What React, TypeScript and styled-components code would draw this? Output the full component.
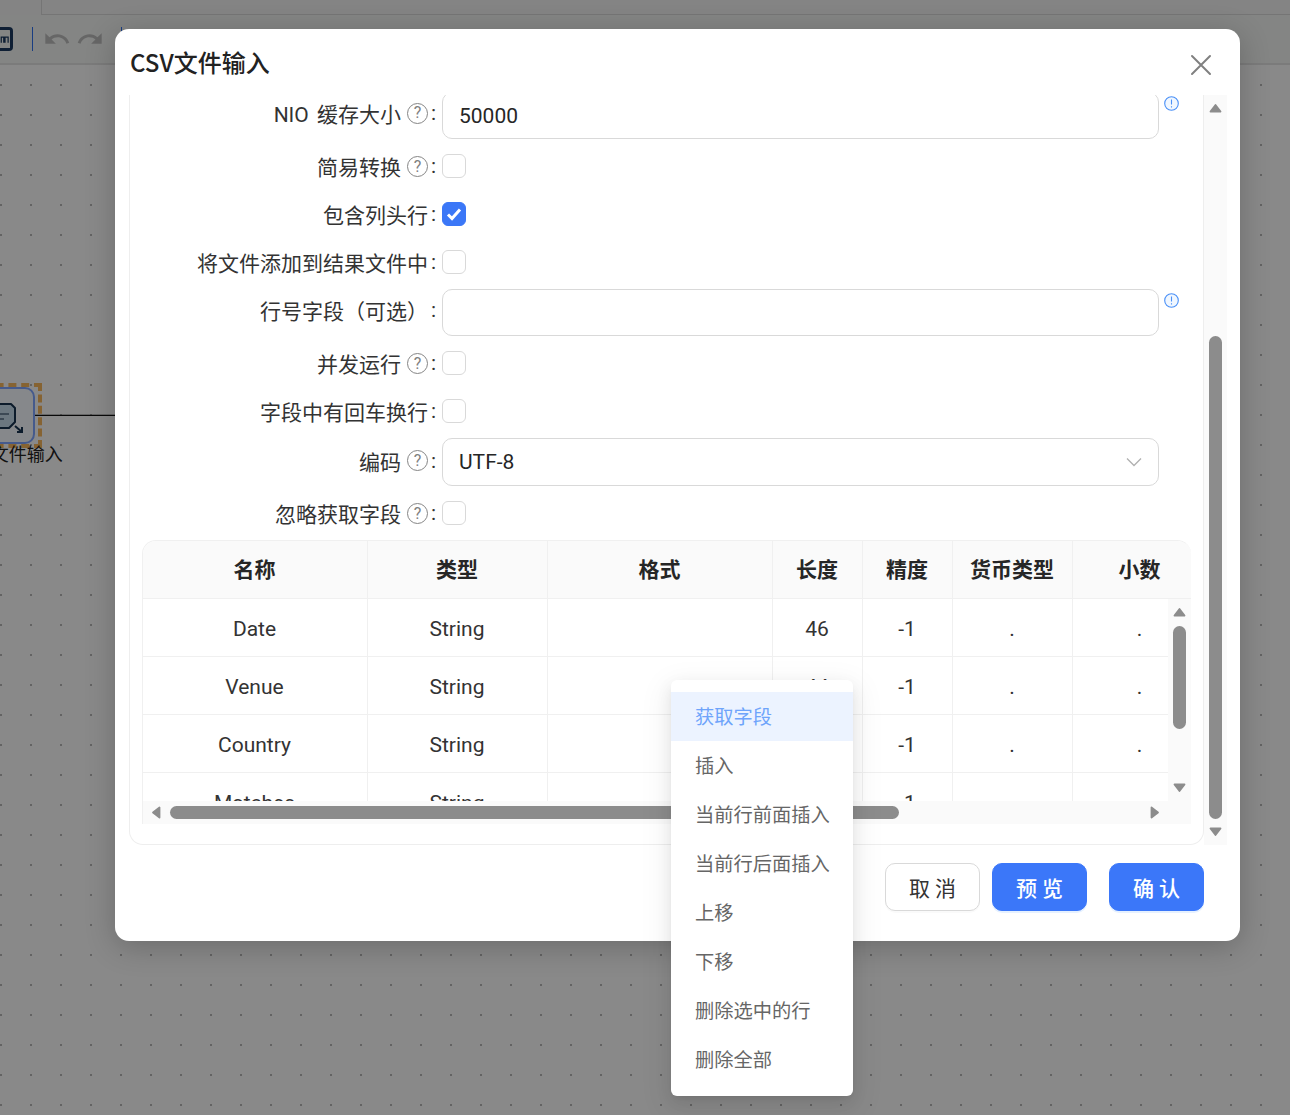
import * as React from 'react'
import styled, { createGlobalStyle } from 'styled-components'

const CJK = `"Noto Sans CJK SC", "Noto Sans", sans-serif`
const FONT = `Roboto, ${CJK}`

const GlobalStyle = createGlobalStyle`
  html, body {
    margin: 0;
    padding: 0;
    background: #fafafa;
  }
  * {
    box-sizing: border-box;
  }
`

type Field = {
  label: string
  kind: 'input' | 'check' | 'select'
  help?: boolean
  info?: boolean
  value?: string
  checked?: boolean
}

const fields: Field[] = [
  { label: 'NIO 缓存大小', kind: 'input', help: true, info: true, value: '50000' },
  { label: '简易转换', kind: 'check', help: true },
  { label: '包含列头行', kind: 'check', checked: true },
  { label: '将文件添加到结果文件中', kind: 'check' },
  { label: '行号字段（可选）', kind: 'input', info: true, value: '' },
  { label: '并发运行', kind: 'check', help: true },
  { label: '字段中有回车换行', kind: 'check' },
  { label: '编码', kind: 'select', help: true, value: 'UTF-8' },
  { label: '忽略获取字段', kind: 'check', help: true }
]

const columns = [
  { title: '名称', width: 225 },
  { title: '类型', width: 180 },
  { title: '格式', width: 225 },
  { title: '长度', width: 90 },
  { title: '精度', width: 90 },
  { title: '货币类型', width: 120 },
  { title: '小数', width: 135 }
]

const rows = [
  ['Date', 'String', '', '46', '-1', '.', '.'],
  ['Venue', 'String', '', '44', '-1', '.', '.'],
  ['Country', 'String', '', '44', '-1', '.', '.'],
  ['Matches', 'String', '', '44', '-1', '.', '.']
]

const menuItems = ['获取字段', '插入', '当前行前面插入', '当前行后面插入', '上移', '下移', '删除选中的行', '删除全部']

const Arrow = ({ dir }: { dir: 'up' | 'down' | 'left' | 'right' }) => {
  const rotate = { up: 0, right: 90, down: 180, left: 270 }[dir]
  return (
    <svg width="13" height="13" viewBox="0 0 13 13" style={{ transform: `rotate(${rotate}deg)`, flex: 'none' }}>
      <path d="M6.5 3 L11.5 9.5 H1.5 Z" fill="#8c8c8c" stroke="#8c8c8c" strokeWidth="1.8" strokeLinejoin="round" />
    </svg>
  )
}

export default function App() {
  return (
    <Page>
      <GlobalStyle />
      <TopStrip>
        <TopTab />
      </TopStrip>
      <Toolbar>
        <ToolSquare>
          <svg width="16" height="14" viewBox="0 0 16 14">
            <path d="M2 13V4h4v9M8 13V4h5v9" fill="none" stroke="#1d3a5f" strokeWidth="2" />
          </svg>
        </ToolSquare>
        <ToolDivider />
        <svg width="28" height="28" viewBox="0 0 24 24">
          <path
            d="M12.5 8c-2.65 0-5.05.99-6.9 2.6L2 7v9h9l-3.62-3.62c1.39-1.16 3.16-1.88 5.12-1.88 3.54 0 6.55 2.31 7.6 5.5l2.37-.78C21.08 11.03 17.15 8 12.5 8z"
            fill="#bababa"
          />
        </svg>
        <ToolRedo>
          <svg width="28" height="28" viewBox="0 0 24 24">
            <path
              d="M18.4 10.6C16.55 8.99 14.15 8 11.5 8c-4.65 0-8.58 3.03-9.96 7.22L3.9 16c1.05-3.19 4.05-5.5 7.6-5.5 1.95 0 3.73.72 5.12 1.88L13 16h9V7l-3.6 3.6z"
              fill="#bababa"
            />
          </svg>
        </ToolRedo>
        <ToolDividerEnd />
      </Toolbar>
      <Canvas>
        <NodeFrame>
          <NodeBox>
            <svg width="36" height="40" viewBox="0 0 36 40">
              <path d="M0 8h20l4 4v14l-6 6H0z" fill="#c4d9ea" stroke="#16324f" strokeWidth="2" strokeLinejoin="round" />
              <path d="M2 18h16M2 23h11" stroke="#16324f" strokeWidth="1.2" />
              <path d="M24 30l7 6M31 31v5h-5" fill="none" stroke="#16324f" strokeWidth="2" />
            </svg>
          </NodeBox>
          <NodeLabel>CSV文件输入</NodeLabel>
        </NodeFrame>
        <NodeLine />
      </Canvas>
      <Mask />
      <Dialog>
        <DialogHeader>
          <DialogTitle>CSV文件输入</DialogTitle>
          <CloseButton>
            <svg width="22" height="22" viewBox="0 0 22 22">
              <path d="M2 2l18 18M20 2L2 20" stroke="#808080" strokeWidth="2" strokeLinecap="round" />
            </svg>
          </CloseButton>
        </DialogHeader>
        <DialogBody>
          <FormPanel>
            <FormInner>
              {fields.map(field => (
                <FieldRow key={field.label} $kind={field.kind}>
                  <FieldLabel $kind={field.kind}>
                    <span>{field.label}</span>
                    {field.help && <HelpMark $kind={field.kind}>?</HelpMark>}
                    <Colon>:</Colon>
                  </FieldLabel>
                  {field.kind === 'check' && (
                    <CheckBox $checked={field.checked}>
                      {field.checked && (
                        <svg width="16" height="14" viewBox="0 0 16 14">
                          <path d="M2 7.5l4 4 8-9" fill="none" stroke="#fff" strokeWidth="3" />
                        </svg>
                      )}
                    </CheckBox>
                  )}
                  {field.kind === 'input' && <TextBox>{field.value}</TextBox>}
                  {field.kind === 'select' && (
                    <SelectBox>
                      <span>{field.value}</span>
                      <svg width="16" height="10" viewBox="0 0 16 10">
                        <path d="M1 1.5l7 7 7-7" fill="none" stroke="#b0b0b0" strokeWidth="1.3" />
                      </svg>
                    </SelectBox>
                  )}
                  {field.info && (
                    <InfoMark>
                      <svg width="15" height="15" viewBox="0 0 15 15">
                        <circle cx="7.5" cy="7.5" r="6.8" fill="#f0f7ff" stroke="#4a90f7" strokeWidth="1.1" />
                        <path d="M7.5 3.6v5M7.5 10.2v1.2" stroke="#4a90f7" strokeWidth="1.1" />
                      </svg>
                    </InfoMark>
                  )}
                </FieldRow>
              ))}
              <TableWrap>
                <HeadRow>
                  {columns.map(col => (
                    <HeadCell key={col.title} $width={col.width}>
                      {col.title}
                    </HeadCell>
                  ))}
                </HeadRow>
                <TableMiddle>
                  <TableRows>
                    {rows.map(row => (
                      <BodyRow key={row[0]}>
                        {row.map((cell, i) => (
                          <BodyCell key={i} $width={columns[i].width}>
                            {cell}
                          </BodyCell>
                        ))}
                      </BodyRow>
                    ))}
                  </TableRows>
                  <TableVBar>
                    <Arrow dir="up" />
                    <TableVThumb />
                    <Arrow dir="down" />
                  </TableVBar>
                </TableMiddle>
                <TableHBar>
                  <Arrow dir="left" />
                  <TableHThumb />
                  <Arrow dir="right" />
                </TableHBar>
              </TableWrap>
            </FormInner>
          </FormPanel>
          <MainBar>
            <Arrow dir="up" />
            <MainThumb />
            <Arrow dir="down" />
          </MainBar>
        </DialogBody>
        <DialogFooter>
          <FooterButton>取 消</FooterButton>
          <FooterButton $primary>预 览</FooterButton>
          <FooterButton $primary>确 认</FooterButton>
        </DialogFooter>
      </Dialog>
      <ContextMenu>
        {menuItems.map((item, i) => (
          <MenuItem key={item} $active={i === 0}>
            {item}
          </MenuItem>
        ))}
      </ContextMenu>
    </Page>
  )
}

const Page = styled.div`
  position: relative;
  width: 1290px;
  height: 1115px;
  overflow: hidden;
  display: flex;
  flex-direction: column;
  font-family: ${FONT};
`

const TopStrip = styled.div`
  height: 15px;
  padding-left: 41px;
  background: #f0f0f0;
`

const TopTab = styled.div`
  height: 15px;
  border-left: 1px solid #d6d6d6;
  border-bottom: 1px solid #d6d6d6;
`

const Toolbar = styled.div`
  height: 50px;
  display: flex;
  align-items: center;
  background: #f0f2f0;
  border-bottom: 2px solid #e0e0e0;
`

const ToolSquare = styled.div`
  width: 13px;
  height: 24px;
  border: 3px solid #1d3a5f;
  border-left: 0;
  border-radius: 0 4px 4px 0;
  display: flex;
  align-items: center;
  justify-content: flex-end;
  overflow: hidden;
`

const ToolDivider = styled.div`
  width: 1px;
  height: 24px;
  margin: 0 10px 0 19px;
  background: #2f6fed;
`

const ToolRedo = styled.div`
  display: flex;
  margin-left: 5px;
`

const ToolDividerEnd = styled(ToolDivider)`
  margin: 0 0 0 17px;
`

const Canvas = styled.div`
  position: relative;
  flex: 1;
  background-color: #fafafa;
  background-image: radial-gradient(circle at 1px 20px, #b4b4b4 1px, transparent 1.3px);
  background-size: 30px 30px;
`

const NodeFrame = styled.div`
  position: absolute;
  left: -30px;
  top: 318px;
  width: 72px;
  height: 65px;
  border: 4px dashed #f5b45c;
  display: flex;
  align-items: center;
  justify-content: flex-start;
`

const NodeBox = styled.div`
  width: 61px;
  height: 57px;
  border: 2px solid #7fa4ff;
  border-radius: 10px;
  background: #f4f8fd;
  display: flex;
  align-items: center;
  justify-content: center;
  padding-left: 8px;
`

const NodeLabel = styled.div`
  position: absolute;
  left: -17px;
  top: 56px;
  width: 110px;
  font-size: 18px;
  line-height: 24px;
  white-space: nowrap;
  color: #222;
`

const NodeLine = styled.div`
  position: absolute;
  left: 35px;
  top: 350px;
  width: 107px;
  height: 1px;
  background: #111;
  box-shadow: 0 -1px 0 rgba(0, 0, 0, 0.25);
`

const Mask = styled.div`
  position: absolute;
  inset: 0;
  background: rgba(0, 0, 0, 0.45);
`

const Dialog = styled.div`
  position: absolute;
  left: 115px;
  top: 29px;
  width: 1125px;
  height: 912px;
  border-radius: 14px;
  background: #fff;
  box-shadow: 0 6px 30px rgba(0, 0, 0, 0.22);
  display: flex;
  flex-direction: column;
`

const DialogHeader = styled.div`
  height: 66px;
  flex: none;
  display: flex;
  align-items: center;
  justify-content: space-between;
  padding: 0 28px 0 15px;
`

const DialogTitle = styled.div`
  font-family: ${CJK};
  font-size: 24px;
  font-weight: 500;
  color: #222;
  padding-bottom: 2px;
`

const CloseButton = styled.div`
  display: flex;
  margin-top: 5px;
`

const DialogBody = styled.div`
  height: 750px;
  flex: none;
  display: flex;
  padding-left: 14px;
`

const FormPanel = styled.div`
  width: 1075px;
  height: 750px;
  border: 1px solid #eeeeee;
  border-top: 0;
  border-radius: 0 0 14px 14px;
  overflow: hidden;
  padding: 0 12px 20px;
`

const FormInner = styled.div`
  margin-top: -6px;
`

const FieldRow = styled.div<{ $kind: Field['kind'] }>`
  display: grid;
  grid-template-columns: 294px 717px 1fr;
  column-gap: 6px;
  align-items: center;
  height: ${p => (p.$kind === 'check' ? 48 : p.$kind === 'select' ? 54 : 53)}px;
`

const FieldLabel = styled.div<{ $kind: Field['kind'] }>`
  display: flex;
  align-items: center;
  justify-content: flex-end;
  font-size: 21px;
  word-spacing: 3px;
  color: #333;
  white-space: nowrap;
  margin-top: ${p => (p.$kind === 'input' ? -5 : p.$kind === 'select' ? -3 : -1)}px;
`

const HelpMark = styled.span<{ $kind: Field['kind'] }>`
  width: 21px;
  height: 21px;
  margin-left: 6px;
  margin-top: ${p => (p.$kind === 'check' ? 2 : 0)}px;
  border: 1.6px solid #858585;
  border-radius: 50%;
  display: flex;
  align-items: center;
  justify-content: center;
  font-size: 16px;
  line-height: 1;
  color: #808080;
`

const Colon = styled.span`
  margin-left: 3px;
  width: 5px;
`

const CheckBox = styled.div<{ $checked?: boolean }>`
  width: 24px;
  height: 24px;
  border-radius: 6px;
  border: 1px solid ${p => (p.$checked ? '#3b77f7' : '#d9d9d9')};
  background: ${p => (p.$checked ? '#3b77f7' : '#fff')};
  display: flex;
  align-items: center;
  justify-content: center;
`

const TextBox = styled.div`
  height: 47px;
  border: 1px solid #d9d9d9;
  border-radius: 10px;
  padding: 0 16px 0;
  display: flex;
  align-items: center;
  font-size: 21px;
  color: #262626;
`

const SelectBox = styled(TextBox)`
  height: 48px;
  justify-content: space-between;
  padding-right: 16px;
`

const InfoMark = styled.div`
  display: flex;
  align-self: start;
  margin: 7px 0 0 -1px;
`

const TableWrap = styled.div`
  margin-top: 3px;
  height: 284px;
  border-left: 1px solid #f0f0f0;
  border-top: 1px solid #f0f0f0;
  border-radius: 14px 14px 0 0;
  overflow: hidden;
`

const HeadRow = styled.div`
  display: flex;
  height: 58px;
  background: #fafafa;
  border-bottom: 1px solid #f0f0f0;
`

const HeadCell = styled.div<{ $width: number }>`
  flex: 0 0 ${p => p.$width}px;
  display: flex;
  align-items: center;
  justify-content: center;
  padding: 0 1px 3px 0;
  font-size: 21px;
  font-weight: 700;
  color: #262626;
  border-right: 1px solid #f0f0f0;
`

const TableMiddle = styled.div`
  display: flex;
  height: 202px;
`

const TableRows = styled.div`
  width: 1025px;
  overflow: hidden;
`

const BodyRow = styled.div`
  display: flex;
  height: 58px;
  border-bottom: 1px solid #f0f0f0;
`

const BodyCell = styled.div<{ $width: number }>`
  flex: 0 0 ${p => p.$width}px;
  display: flex;
  align-items: center;
  justify-content: center;
  padding: 2px 1px 0 0;
  font-size: 21px;
  color: #333;
  border-right: 1px solid #f0f0f0;
`

const TableVBar = styled.div`
  width: 23px;
  background: #fafafa;
  display: flex;
  flex-direction: column;
  align-items: center;
  padding-top: 7px;
`

const TableVThumb = styled.div`
  width: 13px;
  height: 103px;
  margin: 7px 0 52px;
  border-radius: 7px;
  background: #8c8c8c;
`

const TableHBar = styled.div`
  height: 23px;
  background: #fafafa;
  display: flex;
  align-items: center;
  padding: 0 30px 0 7px;
`

const TableHThumb = styled.div`
  width: 729px;
  height: 13px;
  margin: 0 auto 0 7px;
  border-radius: 7px;
  background: #8c8c8c;
`

const MainBar = styled.div`
  width: 23px;
  height: 750px;
  background: #fafafa;
  display: flex;
  flex-direction: column;
  align-items: center;
  padding-top: 7px;
`

const MainThumb = styled.div`
  width: 13px;
  height: 483px;
  margin: 221px 0 6px;
  border-radius: 7px;
  background: #8c8c8c;
`

const DialogFooter = styled.div`
  display: flex;
  justify-content: flex-end;
  gap: 12px;
  padding: 18px 36px 0 0;
`

const FooterButton = styled.div<{ $primary?: boolean }>`
  width: 95px;
  height: 48px;
  border-radius: 10px;
  display: flex;
  align-items: center;
  justify-content: center;
  font-size: 21px;
  font-weight: ${p => (p.$primary ? 500 : 400)};
  white-space: pre;
  color: ${p => (p.$primary ? '#fff' : '#333')};
  background: ${p => (p.$primary ? '#3b77f9' : '#fff')};
  border: 1px solid ${p => (p.$primary ? '#3b77f9' : '#d9d9d9')};
  box-shadow: 0 2px 0 ${p => (p.$primary ? 'rgba(5, 120, 255, 0.1)' : 'rgba(0, 0, 0, 0.02)')};

  &:last-child {
    margin-left: 10px;
  }
`

const ContextMenu = styled.div`
  position: absolute;
  left: 671px;
  top: 680px;
  width: 182px;
  padding: 12px 0;
  border-radius: 6px;
  background: #fff;
  box-shadow: 0 6px 16px rgba(0, 0, 0, 0.08), 0 3px 6px -4px rgba(0, 0, 0, 0.12), 0 9px 28px 8px rgba(0, 0, 0, 0.05);
`

const MenuItem = styled.div<{ $active?: boolean }>`
  height: 49px;
  padding: 0 0 2px 24px;
  display: flex;
  align-items: center;
  font-size: 19.25px;
  white-space: nowrap;
  color: ${p => (p.$active ? '#6ea4fb' : '#666')};
  background: ${p => (p.$active ? '#ecf3ff' : 'transparent')};
`
